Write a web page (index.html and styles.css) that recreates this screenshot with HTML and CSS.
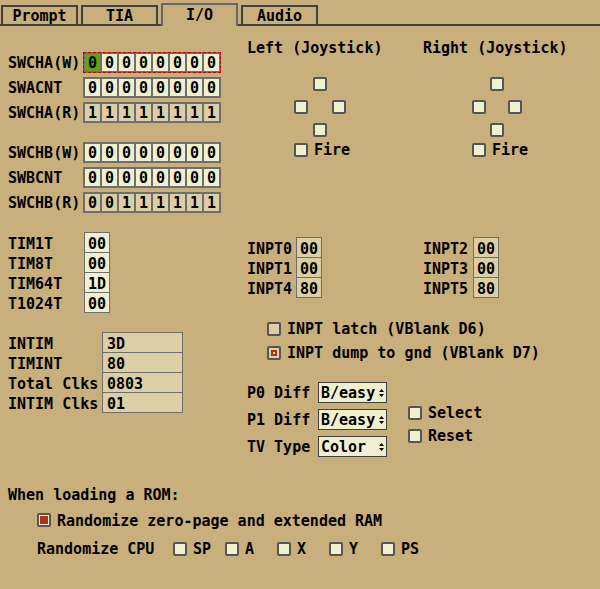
FILE: index.html
```html
<!DOCTYPE html>
<html>
<head>
<meta charset="utf-8">
<link rel="stylesheet" href="styles.css">
</head>
<body>
<div class="tabs">
  <div class="tab">Prompt</div>
  <div class="tab">TIA</div>
  <div class="tab active">I/O</div>
  <div class="tab">Audio</div>
</div>
<div class="main">
  <div class="left">
    <div class="bitgroup">
      <div class="bitrow"><span class="lbl">SWCHA(W)</span><div class="bits focus"><span class="bit cur">0</span><span class="bit">0</span><span class="bit">0</span><span class="bit">0</span><span class="bit">0</span><span class="bit">0</span><span class="bit">0</span><span class="bit">0</span></div></div>
      <div class="bitrow"><span class="lbl">SWACNT</span><div class="bits"><span class="bit">0</span><span class="bit">0</span><span class="bit">0</span><span class="bit">0</span><span class="bit">0</span><span class="bit">0</span><span class="bit">0</span><span class="bit">0</span></div></div>
      <div class="bitrow"><span class="lbl">SWCHA(R)</span><div class="bits ro"><span class="bit">1</span><span class="bit">1</span><span class="bit">1</span><span class="bit">1</span><span class="bit">1</span><span class="bit">1</span><span class="bit">1</span><span class="bit">1</span></div></div>
    </div>
    <div class="bitgroup">
      <div class="bitrow"><span class="lbl">SWCHB(W)</span><div class="bits"><span class="bit">0</span><span class="bit">0</span><span class="bit">0</span><span class="bit">0</span><span class="bit">0</span><span class="bit">0</span><span class="bit">0</span><span class="bit">0</span></div></div>
      <div class="bitrow"><span class="lbl">SWBCNT</span><div class="bits"><span class="bit">0</span><span class="bit">0</span><span class="bit">0</span><span class="bit">0</span><span class="bit">0</span><span class="bit">0</span><span class="bit">0</span><span class="bit">0</span></div></div>
      <div class="bitrow"><span class="lbl">SWCHB(R)</span><div class="bits ro"><span class="bit">0</span><span class="bit">0</span><span class="bit">1</span><span class="bit">1</span><span class="bit">1</span><span class="bit">1</span><span class="bit">1</span><span class="bit">1</span></div></div>
    </div>
    <div class="regs tim">
      <span class="lbl">TIM1T</span><span class="v">00</span>
      <span class="lbl">TIM8T</span><span class="v">00</span>
      <span class="lbl">TIM64T</span><span class="v">1D</span>
      <span class="lbl">T1024T</span><span class="v">00</span>
    </div>
    <div class="regs intim">
      <span class="lbl">INTIM</span><span class="v">3D</span>
      <span class="lbl">TIMINT</span><span class="v">80</span>
      <span class="lbl">Total Clks</span><span class="v">0803</span>
      <span class="lbl">INTIM Clks</span><span class="v">01</span>
    </div>
  </div>
  <div class="right">
    <div class="joysticks">
      <div class="joy">
        <div class="jtitle">Left (Joystick)</div>
        <div class="pad">
          <span class="cb up"></span>
          <span class="cb lf"></span><span class="cb rt"></span>
          <span class="cb dn"></span>
        </div>
        <div class="chk fire"><span class="cb"></span><span>Fire</span></div>
      </div>
      <div class="joy">
        <div class="jtitle">Right (Joystick)</div>
        <div class="pad pad2">
          <span class="cb up"></span>
          <span class="cb lf"></span><span class="cb rt"></span>
          <span class="cb dn"></span>
        </div>
        <div class="chk fire fire2"><span class="cb"></span><span>Fire</span></div>
      </div>
    </div>
    <div class="inpts">
      <div class="regs inpt">
        <span class="lbl">INPT0</span><span class="v">00</span>
        <span class="lbl">INPT1</span><span class="v">00</span>
        <span class="lbl">INPT4</span><span class="v">80</span>
      </div>
      <div class="regs inpt">
        <span class="lbl">INPT2</span><span class="v">00</span>
        <span class="lbl">INPT3</span><span class="v">00</span>
        <span class="lbl">INPT5</span><span class="v">80</span>
      </div>
    </div>
    <div class="latches">
      <div class="chk"><span class="cb tan"></span><span>INPT latch (VBlank D6)</span></div>
      <div class="chk"><span class="cb tan dot"></span><span>INPT dump to gnd (VBlank D7)</span></div>
    </div>
    <div class="console">
      <div class="diffs">
        <div class="drow"><span class="dl">P0 Diff</span><span class="sel"><span class="st">B/easy</span><svg class="arr" width="5" height="8" viewBox="0 0 5 8"><path d="M2.5 0 L5 3 L0 3 Z M0 5 L5 5 L2.5 8 Z" fill="#000"/></svg></span></div>
        <div class="drow"><span class="dl">P1 Diff</span><span class="sel"><span class="st">B/easy</span><svg class="arr" width="5" height="8" viewBox="0 0 5 8"><path d="M2.5 0 L5 3 L0 3 Z M0 5 L5 5 L2.5 8 Z" fill="#000"/></svg></span></div>
        <div class="drow"><span class="dl">TV Type</span><span class="sel"><span class="st">Color</span><svg class="arr" width="5" height="8" viewBox="0 0 5 8"><path d="M2.5 0 L5 3 L0 3 Z M0 5 L5 5 L2.5 8 Z" fill="#000"/></svg></span></div>
      </div>
      <div class="switches">
        <div class="chk"><span class="cb"></span><span>Select</span></div>
        <div class="chk"><span class="cb"></span><span>Reset</span></div>
      </div>
    </div>
  </div>
</div>
<div class="rom">
  <div class="romtitle">When loading a ROM:</div>
  <div class="chk ram"><span class="cb fill"></span><span class="ramtxt">Randomize zero-page and extended RAM</span></div>
  <div class="cpu">
    <span class="cpulbl">Randomize CPU</span>
    <div class="chk opt"><span class="cb"></span><span>SP</span></div>
    <div class="chk opt"><span class="cb"></span><span>A</span></div>
    <div class="chk opt"><span class="cb"></span><span>X</span></div>
    <div class="chk opt"><span class="cb"></span><span>Y</span></div>
    <div class="chk opt"><span class="cb"></span><span>PS</span></div>
  </div>
</div>
</body>
</html>
```
FILE: styles.css
```css
html, body {
  margin: 0;
  padding: 0;
}
body {
  width: 600px;
  height: 589px;
  overflow: hidden;
  background: #c9af7c;
  color: #000;
  font-family: "DejaVu Sans Mono", "Liberation Mono", monospace;
  font-weight: bold;
  font-size: 15px;
  line-height: 17px;
}

/* Tabs */
.tabs {
  display: flex;
  align-items: flex-end;
  gap: 3px;
  height: 24px;
  padding-left: 1px;
  border-bottom: 2px solid #404040;
}
.tab {
  box-sizing: border-box;
  width: 77px;
  height: 19px;
  border: 2px solid #404040;
  border-bottom: none;
  text-align: center;
  line-height: 17px;
  padding-top: 1px;
}
.tab.active {
  height: 23px;
  margin-bottom: -2px;
  border-color: #686868;
  background: #c9af7c;
  padding-top: 2px;
}

/* Layout */
.main {
  display: flex;
}
.left {
  width: 239px;
  padding-left: 8px;
  padding-top: 26px;
  box-sizing: border-box;
}
.right {
  padding-left: 8px;
  padding-top: 14px;
}

/* Bit rows */
.bitgroup {
  display: flex;
  flex-direction: column;
  gap: 4px;
}
.bitgroup + .bitgroup {
  margin-top: 19px;
}
.bitrow {
  display: flex;
  align-items: center;
  height: 21px;
}
.bitrow .lbl {
  width: 75px;
  padding-top: 2px;
}
.bits {
  display: flex;
  gap: 2px;
  padding: 2px;
  background: #6e6e6e;
}
.bit {
  width: 15px;
  height: 17px;
  background: #f0f0cf;
  text-align: center;
  line-height: 19px;
}
.bits.ro .bit {
  background: #dccfa5;
}
.bits.focus {
  outline: 1px dashed #c80000;
  outline-offset: -1px;
}
.bit.cur {
  background: #68a00e;
}

/* Register grids */
.regs {
  display: grid;
  grid-auto-rows: 20px;
  align-items: start;
}
.regs .lbl {
  line-height: 21px;
  padding-top: 2px;
}
.regs .v {
  box-sizing: border-box;
  height: 21px;
  border: 1px solid #6e6e6e;
  line-height: 19px;
  padding-top: 2px;
  padding-left: 3px;
}
.tim {
  margin-top: 19px;
  grid-template-columns: 76px 26px;
}
.tim .v {
  background: #f0f0cf;
}
.intim {
  margin-top: 20px;
  grid-template-columns: 94px 81px;
}
.intim .v {
  background: #dccfa5;
  padding-left: 4px;
}

/* Checkboxes */
.chk {
  display: flex;
  align-items: center;
  gap: 6px;
  height: 14px;
}
.cb {
  box-sizing: border-box;
  display: block;
  flex: none;
  width: 14px;
  height: 14px;
  border: 2px solid #555;
  border-radius: 2px;
  background: #f0f0cf;
  position: relative;
}
.cb.tan {
  background: #dccfa5;
}
.cb.dot::after {
  content: "";
  position: absolute;
  left: 2px;
  top: 2px;
  width: 6px;
  height: 6px;
  box-sizing: border-box;
  background: #f4d8b8;
  border: 2px solid #ac3410;
}
.cb.fill::after {
  content: "";
  position: absolute;
  left: 1px;
  top: 1px;
  width: 8px;
  height: 8px;
  background: #ac3410;
}
.ram .ramtxt {
  padding-top: 2px;
}

/* Joysticks */
.joysticks {
  display: flex;
}
.joy {
  width: 176px;
}
.pad {
  display: grid;
  grid-template-columns: 14px 14px 14px;
  grid-template-rows: 14px 14px 14px;
  column-gap: 5px;
  row-gap: 9px;
  margin-top: 20px;
  margin-left: 47px;
}
.pad2 {
  margin-left: 49px;
  column-gap: 4px;
}
.pad .up { grid-column: 2; grid-row: 1; }
.pad .lf { grid-column: 1; grid-row: 2; }
.pad .rt { grid-column: 3; grid-row: 2; }
.pad .dn { grid-column: 2; grid-row: 3; }
.fire {
  margin-top: 6px;
  margin-left: 47px;
}
.fire2 {
  margin-left: 49px;
}

/* INPT */
.inpts {
  display: flex;
  margin-top: 80px;
}
.inpt {
  width: 176px;
  grid-template-columns: 49px 26px;
}
.inpt + .inpt {
  grid-template-columns: 50px 26px;
}
.inpt .v {
  background: #dccfa5;
  padding-left: 3px;
}

.latches {
  margin-top: 25px;
  margin-left: 20px;
  display: flex;
  flex-direction: column;
  gap: 10px;
}

/* Console switches */
.console {
  display: flex;
  margin-top: 22px;
}
.diffs {
  display: flex;
  flex-direction: column;
  gap: 6px;
}
.drow {
  display: flex;
  align-items: center;
  height: 21px;
}
.dl {
  width: 71px;
  padding-top: 2px;
}
.sel {
  box-sizing: border-box;
  width: 69px;
  height: 21px;
  border: 1px solid #404040;
  background: #f0f0cf;
  display: flex;
  align-items: center;
  justify-content: space-between;
  padding: 0 2px 0 2px;
  line-height: 19px;
}
.sel .st {
  padding-top: 2px;
}
.arr {
  display: block;
}
.switches {
  margin-left: 21px;
  margin-top: 24px;
  display: flex;
  flex-direction: column;
  gap: 9px;
}

/* ROM section */
.rom {
  margin-top: 30px;
  padding-left: 8px;
}
.ram {
  margin-top: 9px;
  margin-left: 29px;
}
.cpu {
  display: flex;
  align-items: center;
  margin-top: 15px;
  margin-left: 29px;
  height: 14px;
}
.cpulbl {
  width: 136px;
}
.opt {
  width: 52px;
  flex: none;
}
```
